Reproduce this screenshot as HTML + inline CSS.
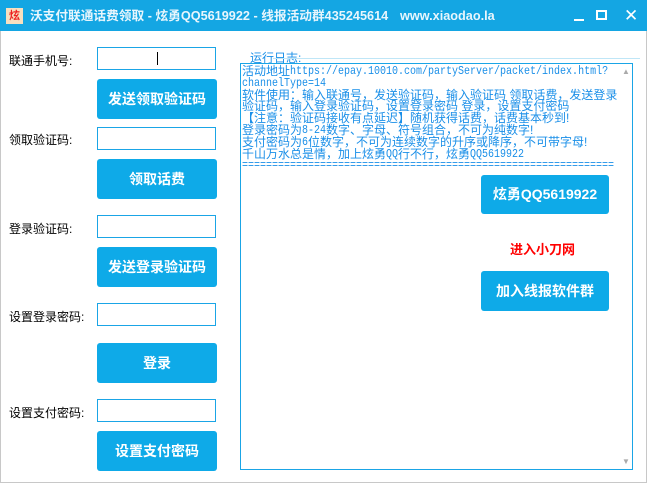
<!DOCTYPE html><html><head><meta charset="utf-8"><style>
body{margin:0;width:647px;height:484px;overflow:hidden;background:#fff;font-family:"Liberation Sans","Noto Sans CJK SC",sans-serif;position:relative}
.win{position:absolute;left:0;top:0;width:645px;height:482px;border:1px solid #c8c8c8;border-top:none}
.tb{position:absolute;left:0;top:0;width:647px;height:31px;background:#14a6e3;color:#e8f6fd;font-size:12.7px;font-weight:bold}
.a{position:absolute;white-space:nowrap}
.tt{line-height:15px;height:15px}
.lbl{font-size:12px;color:#000}
.in{position:absolute;left:97px;width:117px;height:21px;border:1px solid #1aa5e6;background:#fff}
.btn{position:absolute;background:#0eaae8;border-radius:3px;color:#fff;font-weight:bold;font-size:14px;text-align:center}
.log{position:absolute;left:240px;top:63px;width:391px;height:405px;border:1px solid #1aa5e6}
.txt{position:absolute;left:1px;top:1px;font-family:"Liberation Sans","Noto Sans CJK SC",sans-serif;font-size:12px;color:#1a8fe8;width:380px}
.txt div{height:11.8px;line-height:12px;white-space:nowrap}
.m{font-family:"Liberation Mono",monospace;font-size:10px;display:inline-block;transform:scaleY(1.2);transform-origin:bottom}
</style></head><body>
<div class="win"></div>
<div class="tb">
<div class="a" style="left:6px;top:8px;color:#e22;font-size:11px;background:#f8e0c0;width:17px;height:16px;text-align:center;line-height:16px">炫</div>
<div class="a tt" style="left:30px;top:9px">沃支付联通话费领取 - 炫勇QQ5619922 - 线报活动群435245614</div>
<div class="a tt" style="left:400px;top:9px">www.xiaodao.la</div>
<div class="a" style="left:574px;top:19px;width:10px;height:2px;background:#fff"></div>
<div class="a" style="left:596px;top:10px;width:7px;height:6px;border:2px solid #fff"></div>
<div class="a" style="left:624px;top:6px;font-size:17px;color:#fff;font-weight:normal">✕</div>
</div>
<div class="a lbl" style="left:9px;top:52px">联通手机号:</div>
<div class="a lbl" style="left:9px;top:131px">领取验证码:</div>
<div class="a lbl" style="left:9px;top:220px">登录验证码:</div>
<div class="a lbl" style="left:9px;top:308px">设置登录密码:</div>
<div class="a lbl" style="left:9px;top:404px">设置支付密码:</div>
<div class="in" style="top:47px"><div class="a" style="left:59px;top:4px;width:1px;height:13px;background:#000"></div></div>
<div class="in" style="top:127px"></div>
<div class="in" style="top:215px"></div>
<div class="in" style="top:303px"></div>
<div class="in" style="top:399px"></div>
<div class="btn" style="left:97px;top:79px;width:120px;height:40px;line-height:40px">发送领取验证码</div>
<div class="btn" style="left:97px;top:159px;width:120px;height:40px;line-height:40px">领取话费</div>
<div class="btn" style="left:97px;top:247px;width:120px;height:40px;line-height:40px">发送登录验证码</div>
<div class="btn" style="left:97px;top:343px;width:120px;height:40px;line-height:40px">登录</div>
<div class="btn" style="left:97px;top:431px;width:120px;height:40px;line-height:40px">设置支付密码</div>
<div class="a" style="left:250px;top:49px;font-size:12px;color:#1a8fe8">运行日志:</div>
<div class="a" style="left:273px;top:58px;width:367px;height:1px;background:#bfe6f7"></div>
<div class="log">
<div class="txt">
<div>活动地址<span class="m">https://epay.10010.com/partyServer/packet/index.html?</span></div>
<div><span class="m">channelType=14</span></div>
<div>软件使用：输入联通号，发送验证码，输入验证码 领取话费，发送登录</div>
<div>验证码，输入登录验证码，设置登录密码 登录，设置支付密码</div>
<div>【注意：验证码接收有点延迟】随机获得话费，话费基本秒到!</div>
<div>登录密码为<span class="m">8-24</span>数字、字母、符号组合，不可为纯数字!</div>
<div>支付密码为<span class="m">6</span>位数字，不可为连续数字的升序或降序，不可带字母!</div>
<div>千山万水总是情，加上炫勇<span class="m">QQ</span>行不行，炫勇<span class="m">QQ5619922</span></div>
<div><span class="m">==============================================================</span></div>
</div>
<div class="a" style="left:381px;top:3px;font-size:8px;color:#aaa">▲</div>
<div class="a" style="left:381px;top:393px;font-size:8px;color:#aaa">▼</div>
</div>
<div class="btn" style="left:481px;top:175px;width:128px;height:39px;line-height:39px">炫勇QQ5619922</div>
<div class="a" style="left:510px;top:239px;font-size:13px;font-weight:bold;color:#f00">进入小刀网</div>
<div class="btn" style="left:481px;top:271px;width:128px;height:40px;line-height:40px">加入线报软件群</div>
</body></html>
